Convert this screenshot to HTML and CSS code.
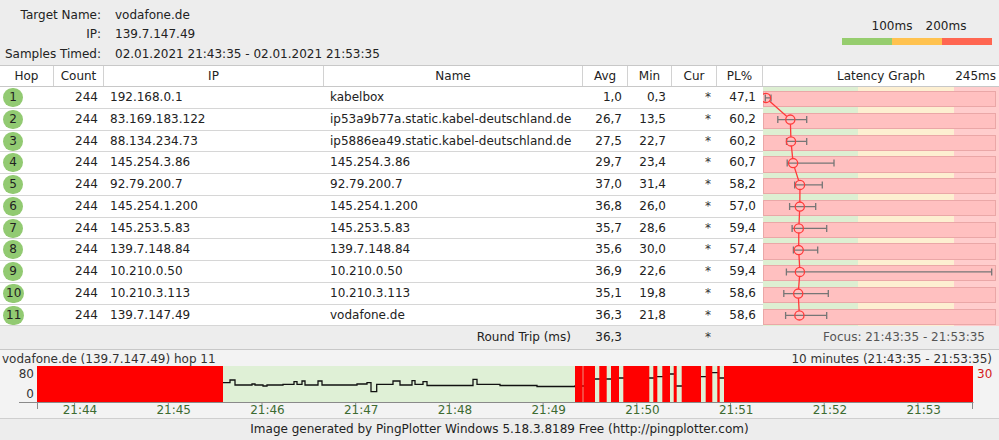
FILE: index.html
```html
<!DOCTYPE html>
<html>
<head>
<meta charset="utf-8">
<link rel="stylesheet" href="styles.css">
</head>
<body>
<div class="top">
  <div class="info">
    <div class="lbl">Target Name:</div><div>vodafone.de</div>
    <div class="lbl">IP:</div><div>139.7.147.49</div>
    <div class="lbl">Samples Timed:</div><div>02.01.2021 21:43:35 - 02.01.2021 21:53:35</div>
  </div>
  <div class="legend">
    <div class="legend-labels"><span>100ms</span><span>200ms</span></div>
    <div class="legend-bar"><span class="g"></span><span class="o"></span><span class="r"></span></div>
  </div>
</div>

<div class="cols head">
  <div>Hop</div><div>Count</div><div>IP</div><div>Name</div><div>Avg</div><div>Min</div><div>Cur</div><div>PL%</div>
  <div class="lg-head"><span></span><span>Latency Graph</span><span class="max">245ms</span></div>
</div>

<div class="rows">
  <div class="cols row"><div><span class="hop">1</span></div><div class="num">244</div><div class="txt">192.168.0.1</div><div class="txt">kabelbox</div><div class="num">1,0</div><div class="num">0,3</div><div class="num cur">*</div><div class="num pl">47,1</div><div class="gcell"><div class="pbox"></div></div></div>
  <div class="cols row"><div><span class="hop">2</span></div><div class="num">244</div><div class="txt">83.169.183.122</div><div class="txt">ip53a9b77a.static.kabel-deutschland.de</div><div class="num">26,7</div><div class="num">13,5</div><div class="num cur">*</div><div class="num pl">60,2</div><div class="gcell"><div class="pbox"></div></div></div>
  <div class="cols row"><div><span class="hop">3</span></div><div class="num">244</div><div class="txt">88.134.234.73</div><div class="txt">ip5886ea49.static.kabel-deutschland.de</div><div class="num">27,5</div><div class="num">22,7</div><div class="num cur">*</div><div class="num pl">60,2</div><div class="gcell"><div class="pbox"></div></div></div>
  <div class="cols row"><div><span class="hop">4</span></div><div class="num">244</div><div class="txt">145.254.3.86</div><div class="txt">145.254.3.86</div><div class="num">29,7</div><div class="num">23,4</div><div class="num cur">*</div><div class="num pl">60,7</div><div class="gcell"><div class="pbox"></div></div></div>
  <div class="cols row"><div><span class="hop">5</span></div><div class="num">244</div><div class="txt">92.79.200.7</div><div class="txt">92.79.200.7</div><div class="num">37,0</div><div class="num">31,4</div><div class="num cur">*</div><div class="num pl">58,2</div><div class="gcell"><div class="pbox"></div></div></div>
  <div class="cols row"><div><span class="hop">6</span></div><div class="num">244</div><div class="txt">145.254.1.200</div><div class="txt">145.254.1.200</div><div class="num">36,8</div><div class="num">26,0</div><div class="num cur">*</div><div class="num pl">57,0</div><div class="gcell"><div class="pbox"></div></div></div>
  <div class="cols row"><div><span class="hop">7</span></div><div class="num">244</div><div class="txt">145.253.5.83</div><div class="txt">145.253.5.83</div><div class="num">35,7</div><div class="num">28,6</div><div class="num cur">*</div><div class="num pl">59,4</div><div class="gcell"><div class="pbox"></div></div></div>
  <div class="cols row"><div><span class="hop">8</span></div><div class="num">244</div><div class="txt">139.7.148.84</div><div class="txt">139.7.148.84</div><div class="num">35,6</div><div class="num">30,0</div><div class="num cur">*</div><div class="num pl">57,4</div><div class="gcell"><div class="pbox"></div></div></div>
  <div class="cols row"><div><span class="hop">9</span></div><div class="num">244</div><div class="txt">10.210.0.50</div><div class="txt">10.210.0.50</div><div class="num">36,9</div><div class="num">22,6</div><div class="num cur">*</div><div class="num pl">59,4</div><div class="gcell"><div class="pbox"></div></div></div>
  <div class="cols row"><div><span class="hop">10</span></div><div class="num">244</div><div class="txt">10.210.3.113</div><div class="txt">10.210.3.113</div><div class="num">35,1</div><div class="num">19,8</div><div class="num cur">*</div><div class="num pl">58,6</div><div class="gcell"><div class="pbox"></div></div></div>
  <div class="cols row"><div><span class="hop">11</span></div><div class="num">244</div><div class="txt">139.7.147.49</div><div class="txt">vodafone.de</div><div class="num">36,3</div><div class="num">21,8</div><div class="num cur">*</div><div class="num pl">58,6</div><div class="gcell"><div class="pbox"></div></div></div>

  <svg class="overlay" width="236" height="240" viewBox="0 0 236 240">
    <polyline points="3,10.9 27.3,32.6 28,54.4 30.1,76.1 37,97.9 36.8,119.6 35.8,141.4 35.7,163.1 36.9,184.9 35.2,206.6 36.4,228.4" fill="none" stroke="#ff3a3a" stroke-width="1.3"/>
    <g fill="#ffc0c0">
      <circle cx="3" cy="10.9" r="4.6"/><circle cx="27.3" cy="32.6" r="4.6"/><circle cx="28" cy="54.4" r="4.6"/><circle cx="30.1" cy="76.1" r="4.6"/><circle cx="37" cy="97.9" r="4.6"/><circle cx="36.8" cy="119.6" r="4.6"/><circle cx="35.8" cy="141.4" r="4.6"/><circle cx="35.7" cy="163.1" r="4.6"/><circle cx="36.9" cy="184.9" r="4.6"/><circle cx="35.2" cy="206.6" r="4.6"/><circle cx="36.4" cy="228.4" r="4.6"/>
    </g>
    <g fill="none" stroke="#767676" stroke-width="1.3">
      <path d="M2.3 10.9H8M2.3 7.4V14.4M8 7.4V14.4"/>
      <path d="M14.8 32.6H43.7M14.8 29.1V36.1M43.7 29.1V36.1"/>
      <path d="M23.5 54.4H43.7M23.5 50.9V57.9M43.7 50.9V57.9"/>
      <path d="M24.2 76.1H71M24.2 72.6V79.6M71 72.6V79.6"/>
      <path d="M31.7 97.9H59.3M31.7 94.4V101.4M59.3 94.4V101.4"/>
      <path d="M26.6 119.6H52.7M26.6 116.1V123.1M52.7 116.1V123.1"/>
      <path d="M29.1 141.4H63.7M29.1 137.9V144.9M63.7 137.9V144.9"/>
      <path d="M30.4 163.1H54.7M30.4 159.6V166.6M54.7 159.6V166.6"/>
      <path d="M23.4 184.9H228.7M23.4 181.4V188.4M228.7 181.4V188.4"/>
      <path d="M20.8 206.6H65.3M20.8 203.1V210.1M65.3 203.1V210.1"/>
      <path d="M22.6 228.4H63.7M22.6 224.9V231.9M63.7 224.9V231.9"/>
    </g>
    <g fill="none" stroke="#ff3a3a" stroke-width="1.3">
      <circle cx="3" cy="10.9" r="4.6"/><circle cx="27.3" cy="32.6" r="4.6"/><circle cx="28" cy="54.4" r="4.6"/><circle cx="30.1" cy="76.1" r="4.6"/><circle cx="37" cy="97.9" r="4.6"/><circle cx="36.8" cy="119.6" r="4.6"/><circle cx="35.8" cy="141.4" r="4.6"/><circle cx="35.7" cy="163.1" r="4.6"/><circle cx="36.9" cy="184.9" r="4.6"/><circle cx="35.2" cy="206.6" r="4.6"/><circle cx="36.4" cy="228.4" r="4.6"/>
    </g>
  </svg>
</div>

<div class="cols rt">
  <div></div><div></div><div></div><div class="rt-label">Round Trip (ms)</div><div class="num">36,3</div><div></div><div class="num cur">*</div><div></div><div class="focus">Focus: 21:43:35 - 21:53:35</div>
</div>

<div class="hist">
  <div class="hist-title"><span>vodafone.de (139.7.147.49) hop 11</span><span>10 minutes (21:43:35 - 21:53:35)</span></div>
  <div class="hist-plot">
    <div class="yaxis"><span>80</span><span>0</span></div>
    <svg class="plot" width="936" height="36" viewBox="0 0 936 36">
      <rect x="0" y="0" width="936" height="36" fill="#dff0d6"/>
      <path d="M186,16.7 H193 V14 H198 V19 H215 V18 H218 V19 H226 V20 H230 V19 H246 V18.3 H257 V15.7 H260 V18.3 H265 V15 H268 V19 H281 V15 H285 V19 H320 V18 H330 V16.7 H334 V25.7 H339.7 V18.3 H356 V15 H363 V19 H375 V14.7 H378 V18.3 H386 V15.7 H390 V19.5 H436 V13.3 H440 V18.3 H463 V19.5 H500 V20.5 H538 V20 H550 V13 H578 V12 H618 V10.7 H629 V8 H638 V20 H650 V10.7 H672 V6.7 H681.5 V12 H690" fill="none" stroke="#111" stroke-width="1.3"/>
      <g fill="#ff0000">
        <rect x="0" y="0" width="186" height="36"/>
        <rect x="538" y="0" width="7.7" height="36"/>
        <rect x="546.3" y="0" width="11.7" height="36"/>
        <rect x="562.3" y="0" width="7.4" height="36"/>
        <rect x="574" y="0" width="8" height="36"/>
        <rect x="586.3" y="0" width="26" height="36"/>
        <rect x="616.3" y="0" width="4" height="36"/>
        <rect x="625.3" y="0" width="7.7" height="36"/>
        <rect x="636.7" y="0" width="3" height="36"/>
        <rect x="644.7" y="0" width="19.3" height="36"/>
        <rect x="668.7" y="0" width="6.6" height="36"/>
        <rect x="680.3" y="0" width="2.4" height="36"/>
        <rect x="687" y="0" width="249" height="36"/>
      </g>
      <g stroke="#8a8a8a" stroke-width="1" fill="none">
        <path d="M-18 36.5H936.5"/>
        <path d="M0.5 36V43M935.5 36V43"/>
        <path d="M37.6 36V39M131.3 36V39M225 36V39M318.7 36V39M412.4 36V39M506.1 36V39M599.8 36V39M693.5 36V39M787.2 36V39M880.9 36V39"/>
      </g>
    </svg>
    <div class="ymax">30</div>
  </div>
  <div class="times"><span>21:44</span><span>21:45</span><span>21:46</span><span>21:47</span><span>21:48</span><span>21:49</span><span>21:50</span><span>21:51</span><span>21:52</span><span>21:53</span></div>
</div>

<div class="footer">Image generated by PingPlotter Windows 5.18.3.8189 Free (http://pingplotter.com)</div>
</body>
</html>
```

FILE: styles.css
```css
* { box-sizing: border-box; }
html, body { margin: 0; padding: 0; }
body {
  width: 999px;
  height: 440px;
  overflow: hidden;
  background: #ededed;
  font-family: "DejaVu Sans", Verdana, sans-serif;
  font-size: 12px;
  color: #222;
}

.top {
  height: 65px;
  display: flex;
  justify-content: space-between;
}
.info {
  display: grid;
  grid-template-columns: 101px auto;
  column-gap: 14px;
  padding-top: 6px;
  line-height: 19.3px;
  align-content: start;
}
.info .lbl { text-align: right; }

.legend {
  width: 150px;
  margin-right: 7px;
  padding-top: 19px;
}
.legend-labels {
  display: flex;
  padding-left: 23px;
  line-height: 15px;
}
.legend-labels span { width: 54px; text-align: center; }
.legend-bar {
  display: flex;
  height: 7.5px;
  margin-top: 3.5px;
}
.legend-bar span { flex: 1; }
.g { background: #96cd6e; }
.o { background: #ffc24f; }
.r { background: #ff6651; }

.cols {
  display: grid;
  grid-template-columns: 54px 50px 220px 259px 45px 44px 45px 46px 236px;
}
.head {
  background: #fff;
  border-top: 1px solid #c8c8c8;
  border-bottom: 1px solid #c8c8c8;
  height: 22px;
  line-height: 20px;
}
.head > div {
  text-align: center;
  border-right: 1px solid #d2d2d2;
  white-space: nowrap;
}
.head > div:last-child { border-right: 0; }
.lg-head {
  display: grid;
  grid-template-columns: 1fr auto 1fr;
}
.lg-head .max { text-align: right; padding-right: 3px; }

.rows {
  position: relative;
  background: #fff;
}
.row {
  height: 21.75px;
  line-height: 20.75px;
}
.row > div {
  border-bottom: 1px solid #d6d6d6;
  white-space: nowrap;
}
.row > .gcell {
  border-bottom: 0;
  background: linear-gradient(to right, #ddefd2 0, #ddefd2 95px, #fdefd1 95px, #fdefd1 191px, #ffcdcd 191px);
  padding: 4px 3px 1.5px 0;
}
.pbox {
  height: 100%;
  background: #ffc0c0;
  border: 1px solid #eaa7a7;
}
.hop {
  display: inline-block;
  margin-left: 3px;
  margin-top: 1px;
  min-width: 20px;
  height: 19px;
  line-height: 19px;
  padding: 0 3px;
  border-radius: 10px;
  background: #92ca72;
  text-align: center;
  vertical-align: top;
}
.num { text-align: right; padding-right: 6px; }
.pl { padding-right: 7px; }
.cur { color: #333; }
.txt { padding-left: 6px; overflow: hidden; }

.overlay {
  position: absolute;
  left: 763px;
  top: 0;
}

.rt {
  height: 23.75px;
  line-height: 23px;
  border-bottom: 1px solid #c8c8c8;
  background: #ededed;
}
.rt-label { text-align: right; padding-right: 12px; }
.focus { text-align: right; padding-right: 14px; color: #555; }

.hist {
  background: #f3f3f3;
  height: 68px;
}
.hist-title {
  display: flex;
  justify-content: space-between;
  height: 16px;
  line-height: 16px;
  padding: 1px 7px 0 2px;
  color: #333;
}
.hist-plot {
  display: grid;
  grid-template-columns: 37px 936px 26px;
  height: 36px;
}
.yaxis {
  display: flex;
  flex-direction: column;
  justify-content: space-between;
  align-items: flex-end;
  padding-right: 3px;
  line-height: 16px;
  color: #333;
}
.plot { display: block; overflow: visible; }
.ymax {
  color: #d41a1a;
  padding-left: 4px;
  line-height: 16px;
}
.times {
  display: flex;
  padding-left: 33.1px;
  height: 16px;
  line-height: 16px;
  color: #3d6b31;
}
.times span { width: 93.75px; flex: none; text-align: center; }

.footer {
  height: 22px;
  border-top: 1px solid #cfcfcf;
  line-height: 21px;
  text-align: center;
  background: #ededed;
}
```
